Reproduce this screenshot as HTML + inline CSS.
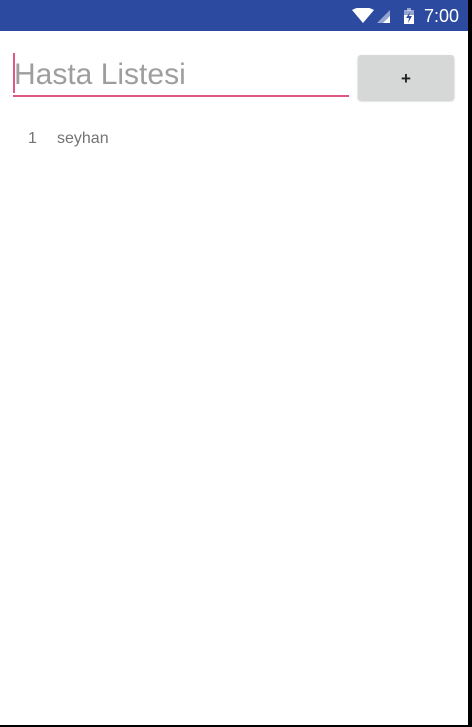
<!DOCTYPE html>
<html><head><style>
body{margin:0;width:472px;height:727px;position:relative;background:#000;overflow:hidden;font-family:"Liberation Sans",sans-serif}
#scr{position:absolute;left:0;top:0;width:468px;height:725px;background:#fff}
#sb{position:absolute;left:0;top:0;width:468px;height:31px;background:#2c4a9f}
#time{position:absolute;left:424px;top:6px;color:#fff;font-size:18px}
#inp{position:absolute;left:14px;top:58px;font-size:30px;color:#9e9e9e}
#cur{position:absolute;left:13px;top:53px;width:2px;height:40px;background:#e05780}
#ul{position:absolute;left:13px;top:95px;width:336px;height:2px;background:#e05780}
#btn{position:absolute;left:358px;top:55px;width:96px;height:45px;background:#d6d7d7;border-radius:3px;box-shadow:0 1px 2px rgba(0,0,0,.25);text-align:center;line-height:47px;font-size:17px;font-weight:bold;color:#222}
.r{position:absolute;top:130px;font-size:16px;color:#737373}
</style></head><body>
<div id="scr">
<div id="sb">
<svg style="position:absolute;left:352px;top:8px" width="70" height="16">
<path d="M0 2 Q11 -4 22 2 L11 15 Z" fill="#fff"/>
<path d="M25 15 L38 2 L38 15 Z" fill="#fff" opacity=".5"/>
<path d="M31 15 L38 8 L38 15 Z" fill="#fff"/>
<rect x="52" y="2" width="10" height="14" fill="#fff" opacity=".5"/>
<rect x="55" y="0" width="4" height="3" fill="#fff" opacity=".5"/>
<rect x="52" y="7" width="10" height="9" fill="#fff"/>
<path d="M58 4 L54 10 L57 10 L56 15 L60 8 L57 8 Z" fill="#2c4a9f"/>
</svg>
<div id="time">7:00</div>
</div>
<div id="inp">Hasta Listesi</div>
<div id="cur"></div>
<div id="ul"></div>
<div id="btn">+</div>
<div class="r" style="left:28px">1</div>
<div class="r" style="left:57px">seyhan</div>
</div>
</body></html>
